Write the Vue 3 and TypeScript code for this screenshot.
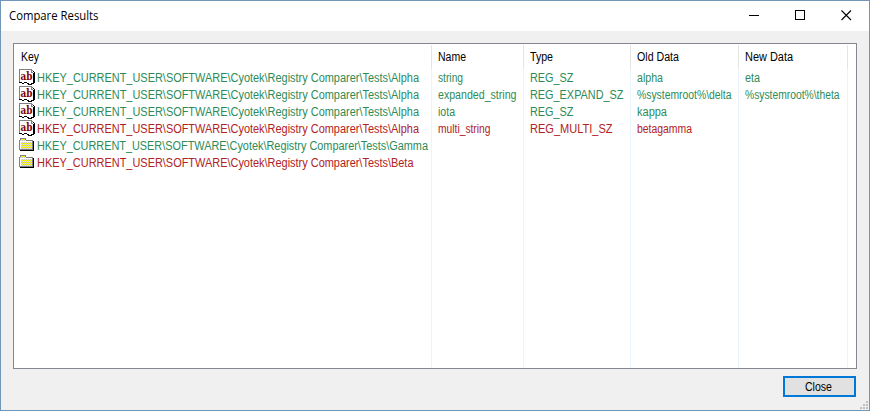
<script setup lang="ts">
interface Run { text: string; width: number }
interface Row { icon: 'value' | 'folder'; kind: 'added' | 'removed'; cells: Run[][] }
const run = (text: string, width: number): Run[] => [{ text, width }]
const keyPath = (leaf: string, width: number): Run[] =>
  run('HKEY_CURRENT_USER\\SOFTWARE\\Cyotek\\Registry Comparer\\Tests\\' + leaf, width)
const columns: Run[][] = [run('Key', 18), run('Name', 28), run('Type', 23), run('Old Data', 42), run('New Data', 48)]
const rows: Row[] = [
  { icon: 'value', kind: 'added', cells: [keyPath('Alpha', 382), run('string', 25), run('REG_SZ', 43.5), run('alpha', 26), run('eta', 15)] },
  { icon: 'value', kind: 'added', cells: [keyPath('Alpha', 382), run('expanded_string', 78.5), run('REG_EXPAND_SZ', 93.5), run('%systemroot%\\delta', 94.5), run('%systemroot%\\theta', 94.5)] },
  { icon: 'value', kind: 'added', cells: [keyPath('Alpha', 382), run('iota', 17), run('REG_SZ', 43.5), run('kappa', 30), []] },
  { icon: 'value', kind: 'removed', cells: [keyPath('Alpha', 382), run('multi_string', 52.5), run('REG_MULTI_SZ', 82.5), run('betagamma', 55), []] },
  { icon: 'folder', kind: 'added', cells: [keyPath('Gamma', 391), [], [], [], []] },
  { icon: 'folder', kind: 'removed', cells: [keyPath('Beta', 376.5), [], [], [], []] },
]
</script>

<template>
  <div class="window">
    <header class="titlebar">
      <svg class="title" width="100" height="30"><text x="0" y="19" textLength="89.5" lengthAdjust="spacingAndGlyphs">Compare Results</text></svg>
      <div class="controls">
        <svg width="11" height="11" viewBox="0 0 11 11" shape-rendering="crispEdges"><path d="M0 5.5h10" stroke="#000" /></svg>
        <svg width="11" height="11" viewBox="0 0 11 11" shape-rendering="crispEdges"><path d="M.5 .5h9v9h-9z" fill="none" stroke="#000" /></svg>
        <svg width="11" height="11" viewBox="0 0 11 11"><path d="M.5 .5l9.5 9.5M10 .5L.5 10" stroke="#000" stroke-width="1.1" /></svg>
      </div>
    </header>
    <main class="list">
      <div class="grid head">
        <div v-for="(c, i) in columns" :key="i" class="cell">
          <svg v-for="r in c" :key="r.text" class="run" :width="r.width" height="24"><text x="0" y="16" :textLength="r.width" lengthAdjust="spacingAndGlyphs">{{ r.text }}</text></svg>
        </div>
      </div>
      <div v-for="(row, i) in rows" :key="i" class="grid row" :class="row.kind">
        <div v-for="(runs, j) in row.cells" :key="j" class="cell">
          <svg v-if="j === 0 && row.icon === 'value'" class="icon" width="16" height="17" viewBox="0 0 16 17" shape-rendering="crispEdges">
            <path d="M1 1h12v2h2v11h-2v1h-3v-1H5v-1H1z" fill="#fff" />
            <path d="M.5 14V.5H13M12.5 1v2.5H14M13 1.5h1" fill="none" stroke="#808080" />
            <path d="M14 2.5h1M15.5 3v11M14.5 4v10M12 14.5h3M9 15.5h4M8 14.5h2M5 13.5h3M3 14.5h2M0 13.5h3" fill="none" stroke="#000" />
            <text x="1.6" y="11" textLength="12" lengthAdjust="spacingAndGlyphs" class="glyph">ab</text>
          </svg>
          <svg v-else-if="j === 0" class="icon" width="16" height="17" viewBox="0 0 16 17" shape-rendering="crispEdges">
            <defs><pattern id="dither" width="2" height="2" patternUnits="userSpaceOnUse"><path d="M0 0h2v2H0z" fill="#ff0" /><path d="M0 0h1v1H0zM1 1h1v1H1z" fill="#c8c8c8" /></pattern></defs>
            <path d="M.5 12.5V3.5l1-1v-1h5v1l1 1h6v9z" fill="url(#dither)" stroke="#808080" />
            <path d="M1.5 12V4.5H13" fill="none" stroke="#fff" />
            <path d="M14.5 4v9.5H1" fill="none" stroke="#000" />
          </svg>
          <svg v-for="r in runs" :key="r.text" class="run" :width="r.width" height="17"><text x="0" y="13" :textLength="r.width" lengthAdjust="spacingAndGlyphs">{{ r.text }}</text></svg>
        </div>
      </div>
      <div class="grid filler"><div v-for="(c, i) in columns" :key="i" class="cell"></div></div>
    </main>
    <footer class="footer"><button class="close" type="button"><svg class="run" width="27" height="17"><text x="0" y="13" textLength="27" lengthAdjust="spacingAndGlyphs">Close</text></svg></button></footer>
    <svg class="grip" width="8" height="8" viewBox="0 0 8 8" shape-rendering="crispEdges"><path d="M6 0h2v2H6zM3 3h2v2H3zM6 3h2v2H6zM0 6h2v2H0zM3 6h2v2H3zM6 6h2v2H6z" fill="#bfbfbf" /></svg>
  </div>
</template>

<style>
body { margin: 0; }
</style>
<style scoped>
* { box-sizing: border-box; }
.window { position: relative; display: flex; flex-direction: column; width: 870px; height: 411px; border: 1px solid #7096ba; background: #f0f0f0; font-family: "Liberation Sans", Arial, sans-serif; font-size: 12px; color: #000; }
.titlebar { display: flex; justify-content: space-between; height: 30px; background: #fff; padding: 0 17px 0 8px; }
.title { font: 400 12px "Open Sans", sans-serif; }
.controls { display: flex; gap: 35px; padding-top: 9px; }
.list { display: flex; flex-direction: column; width: 844px; height: 326px; margin: 12px 0 0 12px; border: 1px solid #828790; background: #fff; }
.grid { display: grid; grid-template-columns: 418px 92px 107px 108px 109px; flex: none; }
.cell { display: flex; min-width: 0; border-right: 1px solid #ebf4fe; padding-left: 5.5px; }
.head { height: 25px; padding-top: 1px; }
.head .cell { border-color: #e5e5e5; }
.head .cell:first-child { padding-left: 6.5px; }
.row { height: 17px; }
.row .cell:first-child { padding-left: 5px; }
.run { flex: none; display: block; overflow: visible; fill: currentColor; }
.icon { flex: none; margin-right: 1.5px; }
.glyph { font: bold 11px "DejaVu Serif", serif; fill: #800000; }
.added { color: #2e8b57; }
.removed { color: #b22222; }
.grid.filler { flex: 1; }
.footer { display: flex; justify-content: flex-end; padding: 7px 13px 0 0; }
.close { display: flex; justify-content: center; width: 73px; height: 21px; padding: 0 3px 0 0; border: 2px solid #0078d7; background: #e1e1e1; font: 12px "Liberation Sans", Arial, sans-serif; color: #000; }
.grip { position: absolute; right: 1px; bottom: 1px; }
</style>
